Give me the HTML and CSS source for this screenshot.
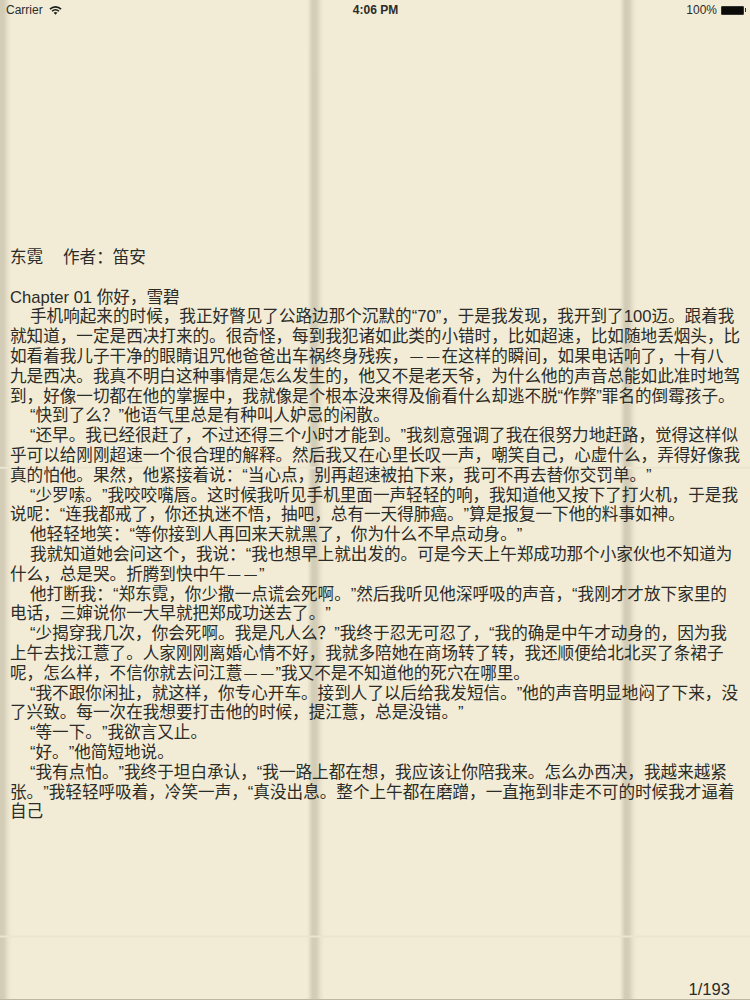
FILE: index.html
```html
<!DOCTYPE html>
<html lang="zh-CN">
<head>
<meta charset="utf-8">
<title>东霓</title>
<link rel="stylesheet" href="styles.css">
</head>
<body>
<div class="page">
  <header class="status">
    <div class="status-left">
      <span>Carrier</span>
      <svg class="wifi" viewBox="0 0 14 10" width="13" height="10" aria-hidden="true">
        <path d="M0.4 3.4 A9.4 9.4 0 0 1 13.6 3.4 L12.3 4.7 A7.6 7.6 0 0 0 1.7 4.7 Z"/>
        <path d="M2.7 5.7 A6.1 6.1 0 0 1 11.3 5.7 L10 7 A4.3 4.3 0 0 0 4 7 Z"/>
        <path d="M5 8 A2.9 2.9 0 0 1 9 8 L7 10 Z"/>
      </svg>
    </div>
    <div class="status-time">4:06 PM</div>
    <div class="status-right">
      <span>100%</span>
      <span class="battery"><span class="battery-fill"></span></span>
    </div>
  </header>
  <main class="book">
    <p class="title">东霓 　作者：笛安</p>
    <p class="first">Chapter 01 你好，雪碧</p>
    <p>手机响起来的时候，我正好瞥见了公路边那个沉默的“70”，于是我发现，我开到了100迈。跟着我<br>就知道，一定是西决打来的。很奇怪，每到我犯诸如此类的小错时，比如超速，比如随地丢烟头，比<br>如看着我儿子干净的眼睛诅咒他爸爸出车祸终身残疾，<span class="dash">——</span>在这样的瞬间，如果电话响了，十有八<br>九是西决。我真不明白这种事情是怎么发生的，他又不是老天爷，为什么他的声音总能如此准时地驾<br>到，好像一切都在他的掌握中，我就像是个根本没来得及偷看什么却逃不脱“作弊”罪名的倒霉孩子。</p>
    <p>“快到了么？”他语气里总是有种叫人妒忌的闲散。</p>
    <p>“还早。我已经很赶了，不过还得三个小时才能到。”我刻意强调了我在很努力地赶路，觉得这样似<br>乎可以给刚刚超速一个很合理的解释。然后我又在心里长叹一声，嘲笑自己，心虚什么，弄得好像我<br>真的怕他。果然，他紧接着说：“当心点，别再超速被拍下来，我可不再去替你交罚单。”</p>
    <p>“少罗嗦。”我咬咬嘴唇。这时候我听见手机里面一声轻轻的响，我知道他又按下了打火机，于是我<br>说呢：“连我都戒了，你还执迷不悟，抽吧，总有一天得肺癌。”算是报复一下他的料事如神。</p>
    <p>他轻轻地笑：“等你接到人再回来天就黑了，你为什么不早点动身。”</p>
    <p>我就知道她会问这个，我说：“我也想早上就出发的。可是今天上午郑成功那个小家伙也不知道为<br>什么，总是哭。折腾到快中午<span class="dash">——</span>”</p>
    <p>他打断我：“郑东霓，你少撒一点谎会死啊。”然后我听见他深呼吸的声音，“我刚才才放下家里的<br>电话，三婶说你一大早就把郑成功送去了。”</p>
    <p>“少揭穿我几次，你会死啊。我是凡人么？”我终于忍无可忍了，“我的确是中午才动身的，因为我<br>上午去找江薏了。人家刚刚离婚心情不好，我就多陪她在商场转了转，我还顺便给北北买了条裙子<br>呢，怎么样，不信你就去问江薏<span class="dash">——</span>”我又不是不知道他的死穴在哪里。</p>
    <p>“我不跟你闲扯，就这样，你专心开车。接到人了以后给我发短信。”他的声音明显地闷了下来，没<br>了兴致。每一次在我想要打击他的时候，提江薏，总是没错。”</p>
    <p>“等一下。”我欲言又止。</p>
    <p>“好。”他简短地说。</p>
    <p>“我有点怕。”我终于坦白承认，“我一路上都在想，我应该让你陪我来。怎么办西决，我越来越紧<br>张。”我轻轻呼吸着，冷笑一声，“真没出息。整个上午都在磨蹭，一直拖到非走不可的时候我才逼着<br>自己</p>
  </main>
  <footer class="pager">1/193</footer>
</div>
</body>
</html>
```

FILE: styles.css
```css
* { box-sizing: border-box; }
html, body { margin: 0; padding: 0; }
body {
  width: 750px;
  height: 1000px;
  overflow: hidden;
  font-family: "Liberation Sans", "Noto Sans CJK SC", sans-serif;
  color: #2b2b28;
  text-spacing-trim: space-all;
}
.page {
  width: 750px;
  height: 1000px;
  display: flex;
  flex-direction: column;
  border-bottom: 1px solid #bcb6a3;
  background-color: #f2ecd6;
  background-image:
    linear-gradient(to bottom, transparent 0, transparent 467px, #ebe5cf 467px, #ebe5cf 469px, transparent 469px),
    linear-gradient(to right,
      #d2ccb7 0, #d4ceb9 4px, #dfd9c3 6px, #ecE6d0 9px, #f2ecd6 12px,
      #f2ecd6 307px, #e8e2cc 309px, #d2ccb7 312.5px);
  background-size: 312.5px 468.75px;
  background-position: 0 0;
}
.status {
  height: 20px;
  flex: none;
  padding: 0 5px 0 6px;
  display: grid;
  grid-template-columns: 1fr auto 1fr;
  align-items: center;
  font-size: 12px;
  color: #2b2b29;
}
.status-left { display: flex; align-items: center; gap: 6px; }
.wifi { fill: #1d1d1b; }
.status-time { font-weight: 700; }
.status-right { display: flex; align-items: center; justify-content: flex-end; gap: 4px; }
.battery {
  position: relative;
  width: 23px;
  height: 9px;
  background: #0b0b0a;
  border: 1px solid #33332f;
  border-radius: 1px;
  margin-right: 1px;
}
.battery::after {
  content: "";
  position: absolute;
  right: -3px;
  top: 1.5px;
  width: 1.5px;
  height: 4px;
  background: #33332f;
}
.book {
  padding: 228px 0 0 10px;
  font-size: 16.6px;
  line-height: 19.8px;
  white-space: nowrap;
}
.book p {
  margin: 0;
  text-indent: 20px;
}
.book p.title { text-indent: 0; margin-bottom: 19.8px; word-spacing: -1.4px; }
.book p.first { text-indent: 0; }
.dash {
  font-size: 12.6px;
  letter-spacing: 4px;
  margin-left: 2px;
  margin-right: -2px;
  line-height: 0;
  vertical-align: 1px;
}
.pager {
  margin-top: auto;
  padding: 0 20px 0 0;
  height: 18px;
  text-align: right;
  font-size: 16.6px;
  line-height: 18px;
}
```
